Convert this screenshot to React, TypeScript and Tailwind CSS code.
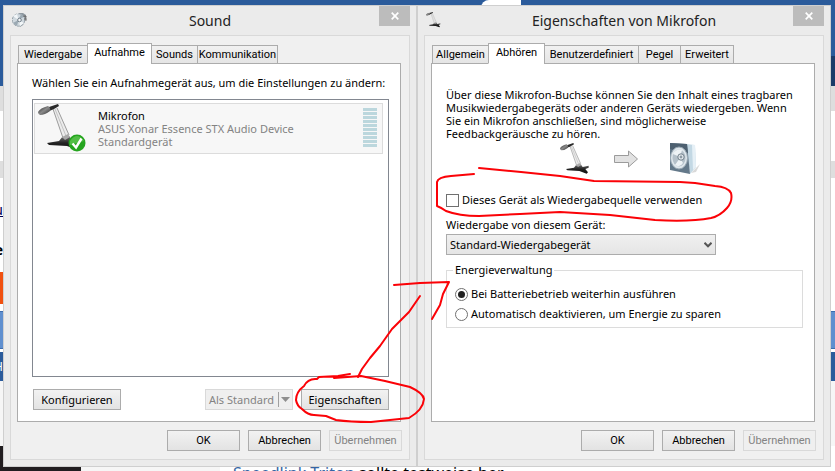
import clsx from "clsx";
import { useState } from "react";

const buttonBase = "h-[21px] shrink-0 border text-center leading-[18px] whitespace-nowrap";
const buttonOn = "border-[#acacac] bg-linear-to-b from-[#f2f2f2] to-[#e3e3e3] text-black";
const buttonOff = "border-[#d9d9d9] bg-[#efefef] text-[#838383]";

type ButtonProps = { className?: string; disabled?: boolean };

function Button({ children, className = "", disabled = false }: React.PropsWithChildren<ButtonProps>) {
  return (
    <button type="button" disabled={disabled} className={clsx(buttonBase, disabled ? buttonOff : buttonOn, className)}>
      {children}
    </button>
  );
}

function MicIcon({ className = "" }: { className?: string }) {
  return (
    <svg className={className} viewBox="0 0 48 48" aria-hidden="true">
      <defs>
        <linearGradient id="head" x1="0" y1="0" x2="1" y2="1">
          <stop offset="0" stopColor="#222" />
          <stop offset="0.5" stopColor="#8a8a8a" />
          <stop offset="1" stopColor="#2b2b2b" />
        </linearGradient>
        <linearGradient id="base" x1="0" y1="0" x2="0" y2="1">
          <stop offset="0" stopColor="#777" />
          <stop offset="0.5" stopColor="#222" />
          <stop offset="1" stopColor="#111" />
        </linearGradient>
      </defs>
      <path d="M9 39 L21 37 L25 32 L31 32 L34 36 L43 34 L43 37 L38 39 L42 44 L40 46 L29 42 L11 41 Z" fill="url(#base)" />
      <path d="M15 5 L19 4 L31 30 Q29 34 25 34 Z" fill="#ececec" />
      <path d="M15 5 L25 34 M19 4 L31 31" fill="none" stroke="#9c9c9c" strokeWidth="1" />
      <path d="M17 5 L28 32" fill="none" stroke="#b9b9b9" strokeWidth="0.8" />
      <path d="M24 33 L30 30 L32 33 L27 36 Z" fill="#a8a8a8" />
      <path d="M8 4 L20 0 L21 2 L16 5 L9 8 Z" fill="#2a2a2a" />
      <path d="M0 8 Q2 4 10 2 Q13 4 12 7 Q7 11 2 11 Q0 10 0 8 Z" fill="url(#head)" />
    </svg>
  );
}

function SpeakerIcon() {
  return (
    <svg className="h-8 w-[30px]" viewBox="0 0 30 32" aria-hidden="true">
      <path d="M21 30 L30 21 L26 29 Z" fill="#d9d9d9" />
      <path d="M16 1 L25 2 L26 24 L20 31 Z" fill="#c3d8e4" />
      <path d="M22 2 L25 2 L26 24 L23 27 Z" fill="#e6f0f6" />
      <path d="M0 0 L17 1 L20 31 L0 27 Z" fill="#64798a" />
      <path d="M0 0 L17 1 L18 10 L0 6 Z" fill="#4d6070" />
      <ellipse cx="9" cy="15" rx="8.5" ry="11" fill="#dfe7ec" stroke="#9aa9b4" />
      <ellipse cx="9" cy="15" rx="6.5" ry="8.5" fill="#b5c1ca" />
      <path d="M10 14 L3 11 Q6 5 12 7 Z M10 15 L5 22 Q10 25 13 20 Z" fill="#eef3f6" />
      <circle cx="11" cy="14" r="3.2" fill="#e6ebef" stroke="#71808b" />
      <circle cx="11" cy="14" r="1.4" fill="#8d9aa4" />
    </svg>
  );
}

function SoundIcon() {
  return (
    <svg className="size-4" viewBox="0 0 16 16" aria-hidden="true">
      <path d="M7 1 L11 1 L14 3 L13 9 L11 13 L8 15 Z" fill="#8d979f" />
      <circle cx="6.5" cy="8" r="6.2" fill="#cfd8de" stroke="#98a3ab" strokeDasharray="3 1" />
      <path d="M6.5 8 L1 4 L5 2 Z M6.5 8 L8 14 L12 11 Z" fill="#f2f6f8" />
      <path d="M6.5 8 L1 11 L5 14 Z M7 7 L9 2 L12 5 Z" fill="#9aa8b2" />
      <circle cx="7.5" cy="8" r="1.8" fill="#f5f7f8" stroke="#6f7c86" />
      <path d="M11 4 L15 5 M12 7 L15 7 M13 3 L14 9" stroke="#666" strokeWidth="0.8" />
    </svg>
  );
}

type DialogProps = {
  title: string;
  icon: React.ReactNode;
  tabs: { name: string; width: string }[];
  active: string;
};

function Dialog({ title, icon, tabs, active, children }: React.PropsWithChildren<DialogProps>) {
  return (
    <section className="flex min-w-0 flex-1 flex-col border border-[#cfcfcf] bg-[#ebebeb] px-1.5 pb-1.5">
      <header className="relative flex h-[29px] items-start">
        <span className="mt-1.5 ml-0.5 flex size-4 items-center">{icon}</span>
        <h1 className="-ml-[18px] flex-1 pt-[5px] text-center text-[14px] leading-5 text-[#222]">{title}</h1>
        <button type="button" aria-label="Schließen" className="absolute top-0 right-0 flex h-5 w-[31px] items-center justify-center bg-[#bcbcbc]">
          <svg className="size-2" viewBox="0 0 8 8" aria-hidden="true">
            <path d="M0.7 0.7 L7.3 7.3 M7.3 0.7 L0.7 7.3" stroke="#fff" strokeWidth="1.7" />
          </svg>
        </button>
      </header>
      <div className="flex flex-1 flex-col border border-[#d9d9d9] bg-[#f0f0f0] pt-[7px] pr-[7px] pb-2 pl-1.5">
        <div role="tablist" className="relative -mb-px flex h-[21px] items-end pl-px font-['Roboto',sans-serif] text-[11px]">
          {tabs.map((tab) => (
            <button
              key={tab.name}
              type="button"
              role="tab"
              aria-selected={tab.name === active}
              className={clsx(
                "-mr-px shrink-0 border border-[#acacac] text-center leading-4 whitespace-nowrap",
                tab.width,
                tab.name === active ? "h-[21px] border-b-white bg-white pb-0.5" : "h-[19px] bg-linear-to-b from-[#f1f1f1] to-[#e5e5e5]",
              )}
            >
              {tab.name}
            </button>
          ))}
        </div>
        <div className="mr-px flex flex-1 flex-col border border-[#acacac] bg-white">{children}</div>
        <footer className="mt-2 flex justify-end gap-2 font-['Roboto',sans-serif] text-[11px]">
          <Button className="w-[73px]">OK</Button>
          <Button className="w-[73px]">Abbrechen</Button>
          <Button className="w-[73px]" disabled>Übernehmen</Button>
        </footer>
      </div>
    </section>
  );
}

function SoundDialog() {
  return (
    <Dialog
      title="Sound"
      icon={<SoundIcon />}
      active="Aufnahme"
      tabs={[
        { name: "Wiedergabe", width: "w-[70px]" },
        { name: "Aufnahme", width: "w-[65px]" },
        { name: "Sounds", width: "w-[47px]" },
        { name: "Kommunikation", width: "w-[81px]" },
      ]}
    >
      <div className="flex flex-1 flex-col px-[11px] pt-[11px] pb-[11px]">
        <p className="ml-[3px] leading-4">Wählen Sie ein Aufnahmegerät aus, um die Einstellungen zu ändern:</p>
        <div className="mt-2 ml-[3px] h-[278px] border border-[#828790] p-px pt-[3px] pr-[5px]">
          <div className="flex h-[51px] border border-[#dcdcdc] bg-[#f7f7f7]">
            <div className="relative ml-[3px] size-12">
              <MicIcon className="size-12" />
              <svg className="absolute right-0 bottom-0 size-[18px]" viewBox="0 0 18 18" aria-hidden="true">
                <circle cx="9" cy="9" r="8.5" fill="#25a51f" />
                <path d="M2 7 Q9 -3 16 7 Q9 9 2 11 Z" fill="#6fce5f" opacity="0.6" />
                <path d="M4.5 9.5 L8 13.5 L13.5 4.5" fill="none" stroke="#fff" strokeWidth="2.4" />
              </svg>
            </div>
            <div className="ml-3 flex-1 pt-[5px] leading-[13px] text-[#838383]">
              <p className="text-black">Mikrofon</p>
              <p>ASUS Xonar Essence STX Audio Device</p>
              <p>Standardgerät</p>
            </div>
            <div className="mt-1 mr-[5px] flex w-3.5 flex-col gap-px">
              {Array.from({ length: 10 }, (_, i) => (
                <span key={i} className="h-[3px] bg-[#bcd7dd]" />
              ))}
            </div>
          </div>
        </div>
        <div className="mt-3 ml-1 flex gap-2">
          <Button className="mr-auto w-[88px]">Konfigurieren</Button>
          <Button className="flex w-[88px] items-center pl-[3px]" disabled>
            <span className="flex-1 text-left">Als Standard</span>
            <span className="h-[15px] w-px bg-[#a0a0a0]" />
            <svg className="mx-0.5 h-[5px] w-[9px]" viewBox="0 0 9 5" aria-hidden="true">
              <path d="M0 0 H9 L4.5 5 Z" fill="#8e8e8e" />
            </svg>
          </Button>
          <Button className="w-[88px]">Eigenschaften</Button>
        </div>
      </div>
    </Dialog>
  );
}

function PropertiesDialog() {
  const [listen, setListen] = useState(false);
  const [power, setPower] = useState("run");

  return (
    <Dialog
      title="Eigenschaften von Mikrofon"
      icon={<MicIcon className="size-4" />}
      active="Abhören"
      tabs={[
        { name: "Allgemein", width: "w-[57px]" },
        { name: "Abhören", width: "w-[57px]" },
        { name: "Benutzerdefiniert", width: "w-[95px]" },
        { name: "Pegel", width: "w-[43px]" },
        { name: "Erweitert", width: "w-[54px]" },
      ]}
    >
      <div className="flex flex-1 flex-col items-start pt-6 pr-[11px] pl-3.5">
        <p className="leading-[13px] whitespace-nowrap">
          Über diese Mikrofon-Buchse können Sie den Inhalt eines tragbaren
          <br />
          Musikwiedergabegeräts oder anderen Geräts wiedergeben. Wenn
          <br />
          Sie ein Mikrofon anschließen, sind möglicherweise
          <br />
          Feedbackgeräusche zu hören.
        </p>
        <div className="mt-[3px] ml-[114px] flex h-8 items-center">
          <MicIcon className="size-8" />
          <svg className="ml-[22px] h-[18px] w-6" viewBox="0 0 24 18" aria-hidden="true">
            <path d="M0.5 5.5 H14.5 V1 L23.5 9 L14.5 17 V12.5 H0.5 Z" fill="#e2e2e2" stroke="#9b9b9b" />
          </svg>
          <span className="ml-8">
            <SpeakerIcon />
          </span>
        </div>
        <label className="mt-[17px] flex items-center gap-[3px] leading-4">
          <input
            type="checkbox"
            checked={listen}
            onChange={(e) => setListen(e.target.checked)}
            className="size-[13px] appearance-none border border-[#707070] bg-white checked:bg-[#222]"
          />
          Dieses Gerät als Wiedergabequelle verwenden
        </label>
        <label htmlFor="device" className="mt-[9px] leading-4">Wiedergabe von diesem Gerät:</label>
        <div className="relative mt-px flex w-[270px]">
          <select id="device" className="h-[21px] w-full appearance-none border border-[#acacac] bg-linear-to-b from-[#f0f0f0] to-[#e5e5e5] pl-[3px] leading-[18px]">
            <option>Standard-Wiedergabegerät</option>
          </select>
          <svg className="pointer-events-none absolute top-2 right-1 h-1.5 w-2" viewBox="0 0 8 6" aria-hidden="true">
            <path d="M0.5 0.8 L4 4.3 L7.5 0.8" fill="none" stroke="#555" strokeWidth="2" />
          </svg>
        </div>
        <fieldset className="mt-[7px] flex h-[66px] w-full flex-col gap-1 border border-[#dcdcdc] px-2 pt-2">
          <legend className="-ml-0.5 px-0.5 leading-4">Energieverwaltung</legend>
          {[
            ["run", "Bei Batteriebetrieb weiterhin ausführen"],
            ["off", "Automatisch deaktivieren, um Energie zu sparen"],
          ].map(([value, text]) => (
            <label key={value} className="flex items-center gap-[3px] leading-4">
              <input
                type="radio"
                name="power"
                value={value}
                checked={power === value}
                onChange={() => setPower(value)}
                className="size-[13px] appearance-none rounded-full border border-[#707070] bg-white bg-clip-content p-0.5 checked:bg-[#222]"
              />
              {text}
            </label>
          ))}
        </fieldset>
      </div>
    </Dialog>
  );
}

// the web page behind both dialogs, only its edges show
function Backdrop() {
  return (
    <div className="absolute inset-0 -z-10 flex flex-col overflow-hidden bg-white">
      <div className="relative h-[86px] shrink-0 bg-[#2b5b9b]">
        <div className="ml-[481px] h-5 w-10 rounded-tl-lg bg-white" />
        <div className="absolute right-0 bottom-0 h-[30px] w-2 bg-[#1c3b69]" />
      </div>
      <div className="h-[25px] shrink-0 bg-[#dedede]" />
      <div className="mt-[50px] h-[17px] shrink-0 bg-[#dedede]" />
      <div className="flex h-[94px] w-[3px] shrink-0 flex-col items-end justify-end gap-5 overflow-hidden pb-3">
        <span className="text-[14px] leading-5 text-[#000050] underline">u</span>
        <span className="text-[14px] leading-5 font-bold">e</span>
      </div>
      <div className="h-8 w-1 shrink-0 bg-[#f0500f]" />
      <div className="mt-[7px] h-[38px] shrink-0 border-y border-[#3c6cad] bg-[#5f8fcf]" />
      <div className="mt-[3px] flex h-[29px] w-full shrink-0 items-center bg-[#2b5b9b]">
        <span className="flex w-[3px] justify-end overflow-hidden text-[12px] text-white">H</span>
      </div>
      <div className="flex flex-1 items-end bg-[#f6f6f6]">
        <div className="h-[25px] w-[81px] bg-[#211d20]" />
        <p className="ml-[139px] h-[25px] flex-1 overflow-hidden bg-white pt-[19px] pl-[13px] text-[16px] leading-4 whitespace-nowrap">
          <a href="#triton" className="text-[#3465a4]">Speedlink Triton</a> sollte testweise her
        </p>
      </div>
    </div>
  );
}

function Scribbles() {
  return (
    <svg className="pointer-events-none absolute top-0 left-0 h-[471px] w-[835px]" viewBox="0 0 835 471" fill="none" stroke="#fb0207" strokeWidth="2" strokeLinejoin="round" strokeLinecap="round" aria-hidden="true">
      <path d="M474 174 L451 176 Q438 177 437 182 V206 Q442 208 446 211 Q459 216 479 216 L520 214 L560 212 L610 215 L655 220 Q690 222 711 218 Q720 216 727 208 Q733 201 731 193 Q728 187 715 186 L695 183 L680 182 L594 181 L560 176 L521 172 L479 168" />
      <path d="M394 285 L420 283 L449 282 L443 294 L440 305 L432 319" />
      <path d="M420 296 L409 312 L392 329 L380 346 L370 358 L362 369 L358 377" />
      <path d="M350 374 L338 376 L319 377 L317 379 Q308 378 304 386 Q296 392 296 400 Q297 406 302 409 Q308 415 314 415 L326 416 L336 420 Q350 422 371 422 L409 418 Q423 410 424 399 Q423 393 410 387 L385 381 L361 376 L334 378" />
    </svg>
  );
}

export default function App() {
  return (
    <main className="relative isolate min-h-screen font-['Noto_Sans','Open_Sans',sans-serif] text-[11px] text-black">
      <Backdrop />
      <div className="flex pt-[5px] pr-1 pl-[3px]">
        <SoundDialog />
        <PropertiesDialog />
      </div>
      <Scribbles />
    </main>
  );
}
